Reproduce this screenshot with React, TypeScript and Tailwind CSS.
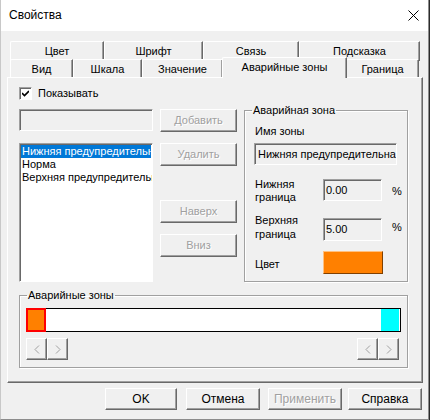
import React from 'react';

const raised =
  'border border-t-white border-l-white border-r-[#696969] border-b-[#696969] shadow-[inset_-1px_-1px_0_#a0a0a0]';
const sunken =
  'border border-t-[#a0a0a0] border-l-[#a0a0a0] border-r-white border-b-white shadow-[inset_1px_1px_0_#696969]';
const disabledText = 'text-[#a0a0a0] [text-shadow:1px_1px_0_#fff]';

function Btn({ label, className = '', disabled = false }: { label: string; className?: string; disabled?: boolean }) {
  return (
    <div className={`${raised} bg-[#f0f0f0] flex items-center justify-center ${disabled ? disabledText : 'text-black'} ${className}`}>
      {label}
    </div>
  );
}

function Arrow({ dir }: { dir: 'l' | 'r' }) {
  return (
    <div className={`${raised} w-[21px] h-[22px] flex items-center justify-center bg-[#f0f0f0]`}>
      <svg width="6" height="9" viewBox="0 0 6 9">
        <path d={dir === 'l' ? 'M5 0.5 L1 4.5 L5 8.5' : 'M1 0.5 L5 4.5 L1 8.5'} fill="none" stroke="#a0a0a0" strokeWidth="1" />
      </svg>
    </div>
  );
}

const row1 = [
  { t: 'Цвет', w: 'w-[94px]' },
  { t: 'Шрифт', w: 'w-[99px]' },
  { t: 'Связь', w: 'w-[96px]' },
  { t: 'Подсказка', w: 'w-[121px]' },
];

export default function App() {
  return (
    <div className="w-[430px] h-[420px] bg-[#2b2b2b]" style={{ fontFamily: '"Liberation Sans", Arial, sans-serif' }}>
      <div className="w-[429px] h-[420px] bg-[#f0f0f0] border-r border-b border-l border-r-[#8c8c8c] border-b-[#8c8c8c] border-l-[#c8c8c8] flex flex-col text-[11px] leading-[13px] text-black">
        {/* title */}
        <div className="h-[31px] bg-white flex items-center justify-between pl-[8px] pr-[9px] shrink-0">
          <span className="text-[12px]">Свойства</span>
          <svg width="11" height="11" viewBox="0 0 11 11">
            <path d="M0.5 0.5 L10.5 10.5 M10.5 0.5 L0.5 10.5" stroke="#000" strokeWidth="1" />
          </svg>
        </div>

        {/* tabs */}
        <div className="pt-[10px] pl-[9px]">
          <div className="flex h-[18px]">
            {row1.map((t) => (
              <div
                key={t.t}
                className={`${t.w} h-[20px] border-t border-l border-r border-t-white border-l-white border-r-[#696969] rounded-tl-[2px] shadow-[inset_-1px_0_0_#a0a0a0] flex items-start justify-center pt-[3px]`}
              >
                {t.t}
              </div>
            ))}
          </div>
          <div className="flex h-[18px] items-end">
            <div className="w-[63px] h-[18px] border-t border-l border-r border-t-white border-l-white border-r-[#696969] rounded-tl-[2px] shadow-[inset_-1px_0_0_#a0a0a0] bg-[#f0f0f0] flex justify-center pt-[3px]">Вид</div>
            <div className="w-[69px] h-[18px] border-t border-l border-r border-t-white border-l-white border-r-[#696969] rounded-tl-[2px] shadow-[inset_-1px_0_0_#a0a0a0] bg-[#f0f0f0] flex justify-center pt-[3px]">Шкала</div>
            <div className="w-[81px] h-[18px] border-t border-l border-r border-t-white border-l-white border-r-[#696969] rounded-tl-[2px] shadow-[inset_-1px_0_0_#a0a0a0] bg-[#f0f0f0] flex justify-center pt-[3px]">Значение</div>
            <div className="relative z-10 w-[125px] h-[21px] -mx-[1px] -mb-[1px] border-t border-l border-r border-t-white border-l-white border-r-[#696969] rounded-tl-[2px] shadow-[inset_-1px_0_0_#a0a0a0] bg-[#f0f0f0] flex justify-center pt-[3px]">Аварийные зоны</div>
            <div className="w-[73px] h-[18px] border-t border-l border-r border-t-white border-l-white border-r-[#696969] rounded-tl-[2px] shadow-[inset_-1px_0_0_#a0a0a0] bg-[#f0f0f0] flex justify-center pt-[3px]">Граница</div>
          </div>
        </div>

        {/* panel */}
        <div className={`ml-[6px] w-[416px] h-[306px] ${raised} bg-[#f0f0f0] flex flex-col`}>
          <div className="flex items-center pl-[11px] pt-[9px]">
            <div className={`w-[13px] h-[13px] ${sunken} bg-white flex items-center justify-center`}>
              <svg width="7" height="7" viewBox="0 0 7 7">
                <path d="M0 3 L2.5 5.5 L7 1" fill="none" stroke="#000" strokeWidth="1.6" />
              </svg>
            </div>
            <span className="ml-[6px]">Показывать</span>
          </div>

          <div className="flex items-start pl-[11px] mt-[1px]">
            {/* left */}
            <div className="w-[134px] flex flex-col pt-[8px]">
              <div className={`h-[22px] ${sunken} bg-[#f0f0f0]`} />
              <div className={`mt-[12px] h-[139px] ${sunken} bg-white pt-[1px] px-[1px] overflow-hidden whitespace-nowrap`}>
                <div className="bg-[#0078d7] text-white pl-[1px] h-[13px]">Нижняя предупредительная</div>
                <div className="pl-[1px] h-[13px]">Норма</div>
                <div className="pl-[1px] h-[13px]">Верхняя предупредительная</div>
              </div>
            </div>

            {/* middle */}
            <div className="ml-[7px] w-[77px] flex flex-col pt-[8px]">
              <Btn label="Добавить" disabled className="h-[23px]" />
              <Btn label="Удалить" disabled className="h-[23px] mt-[11px]" />
              <Btn label="Наверх" disabled className="h-[23px] mt-[34px]" />
              <Btn label="Вниз" disabled className="h-[23px] mt-[11px]" />
            </div>

            {/* group */}
            <fieldset className="ml-[7px] mt-[3px] w-[164px] h-[178px] p-0 min-w-0 border border-[#a0a0a0] shadow-[1px_1px_0_#fff,inset_1px_1px_0_#fff]">
              <legend className="ml-[7px] px-[1px] leading-[13px]">Аварийная зона</legend>
              <div className="pl-[10px] pt-[8px]">
                <div>Имя зоны</div>
                <div className={`-ml-[1px] mt-[5px] w-[143px] h-[22px] ${sunken} bg-[#f0f0f0] pl-[3px] pt-[4px] overflow-hidden whitespace-nowrap`}>
                  Нижняя предупредительная
                </div>
                <div className="flex items-start mt-[12px]">
                  <div className="w-[68px] pt-[1px]">Нижняя<br />граница</div>
                  <div className={`mt-[2px] w-[59px] h-[22px] ${sunken} bg-[#f0f0f0] pl-[2px] pt-[4px]`}>0.00</div>
                  <div className="ml-[10px] mt-[8px]">%</div>
                </div>
                <div className="flex items-start mt-[9px]">
                  <div className="w-[68px] leading-[14px]">Верхняя<br />граница</div>
                  <div className={`mt-[5px] w-[59px] h-[23px] ${sunken} bg-[#f0f0f0] pl-[2px] pt-[4px]`}>5.00</div>
                  <div className="ml-[10px] mt-[8px]">%</div>
                </div>
                <div className="flex items-start mt-[10px]">
                  <div className="w-[68px] pt-[7px]">Цвет</div>
                  <div className="w-[60px] h-[23px] bg-[#ff8000] border border-t-[#ffc080] border-l-[#ffc080] border-r-[#804000] border-b-[#804000]" />
                </div>
              </div>
            </fieldset>
          </div>

          {/* bottom group */}
          <fieldset className="ml-[11px] mt-[7px] w-[389px] h-[79px] p-0 min-w-0 border border-[#a0a0a0] shadow-[1px_1px_0_#fff,inset_1px_1px_0_#fff]">
            <legend className="ml-[7px] px-[1px] leading-[13px]">Аварийные зоны</legend>
            <div className="pl-[6px] pt-[6px]">
              <div className="w-[375px] h-[24px] flex border border-black bg-white">
                <div className="-ml-[1px] -my-[1px] w-[20px] bg-[#ff0000] p-[2px]">
                  <div className="w-full h-full bg-[#ff8000]" />
                </div>
                <div className="ml-auto w-[18px] mr-[1px] bg-[#00ffff]" />
              </div>
              <div className="w-[373px] flex justify-between mt-[6px]">
                <div className="flex">
                  <Arrow dir="l" />
                  <Arrow dir="r" />
                </div>
                <div className="flex">
                  <Arrow dir="l" />
                  <Arrow dir="r" />
                </div>
              </div>
            </div>
          </fieldset>
        </div>

        {/* footer buttons */}
        <div className="flex mt-[5px] pl-[104px]">
          <Btn label="OK" className="w-[72px] h-[22px] text-[12px]" />
          <Btn label="Отмена" className="w-[74px] h-[22px] ml-[9px] text-[12px]" />
          <Btn label="Применить" disabled className="w-[74px] h-[22px] ml-[8px] text-[12px]" />
          <Btn label="Справка" className="w-[74px] h-[22px] ml-[6px] text-[12px]" />
        </div>
      </div>
    </div>
  );
}
